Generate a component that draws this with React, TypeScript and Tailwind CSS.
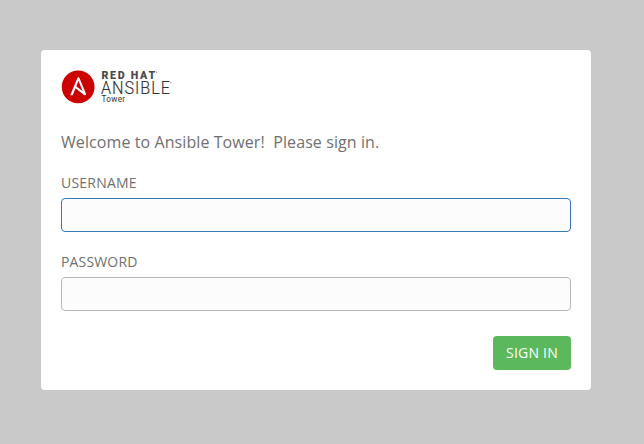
export default function App() {
  return (
    <div className="flex h-[444px] w-[644px] items-start bg-[#c9c9c9] pt-[50px] pl-[41px] font-['Open_Sans',sans-serif] text-[#707070]">
      <main className="h-[340px] w-[550px] rounded-[4px] bg-white p-5">
        <svg className="block overflow-visible font-[Roboto,sans-serif]" width="112" height="34" viewBox="0 0 112 34" role="img" aria-label="Red Hat Ansible Tower">
          <circle cx="17.2" cy="17" r="15" fill="#fff" />
          <path
            transform="translate(.8 .6) scale(1.365)"
            fill="#c00"
            d="M10.617 11.473l4.686 3.695-3.102-7.662zM12 0C5.371 0 0 5.371 0 12s5.371 12 12 12 12-5.371 12-12S18.629 0 12 0zm5.797 17.305c-.011.471-.403.842-.875.83-.236 0-.416-.09-.664-.293l-6.19-5-2.079 5.203H6.191L11.438 5.44c.124-.314.427-.52.764-.506.326-.014.63.189.742.506l4.774 11.494c.045.111.08.234.08.348-.001.009-.001.009-.001.023z"
          />
          <text transform="translate(40.4 9.4) scale(.97 1)" fontSize="11" fontWeight="900" fill="#4a4a4a" textLength="55.5" lengthAdjust="spacing">RED HAT</text>
          <text transform="translate(40 24) scale(.9 1)" fontSize="18" fontWeight="300" fill="#333" stroke="#333" strokeWidth=".15" textLength="76.5" lengthAdjust="spacing">ANSIBLE</text>
          <text x="40.6" y="32.4" fontSize="8.2" fontWeight="400" fill="#333" textLength="23.4" lengthAdjust="spacing">Tower</text>
          <circle cx="95.6" cy="2.2" r=".6" fill="#777" />
          <circle cx="109.8" cy="12.6" r=".6" fill="#777" />
        </svg>
        <p className="mt-[26px] h-6 whitespace-pre text-[16px] leading-6 tracking-[0.085px]">Welcome to Ansible Tower!  Please sign in.</p>
        <form onSubmit={(e) => e.preventDefault()}>
          <label htmlFor="u" className="mt-[19px] block h-5 text-[14px] leading-5 tracking-[0.22px]">USERNAME</label>
          <input id="u" className="mt-[5px] block h-[34px] w-full rounded-[4px] border border-[#337ab7] bg-[#fcfcfc] px-3 outline-none" />
          <label htmlFor="p" className="mt-5 block h-5 text-[14px] leading-5 tracking-[0.16px]">PASSWORD</label>
          <input id="p" type="password" className="mt-[5px] block h-[34px] w-full rounded-[4px] border border-[#b7b7b7] bg-[#fcfcfc] px-3 outline-none" />
          <div className="mt-[25px] flex justify-end">
            <button className="h-[34px] w-[78px] rounded-[4px] bg-[#5cb85c] text-[14px] leading-[34px] tracking-[0.2px] text-white">SIGN IN</button>
          </div>
        </form>
      </main>
    </div>
  );
}
